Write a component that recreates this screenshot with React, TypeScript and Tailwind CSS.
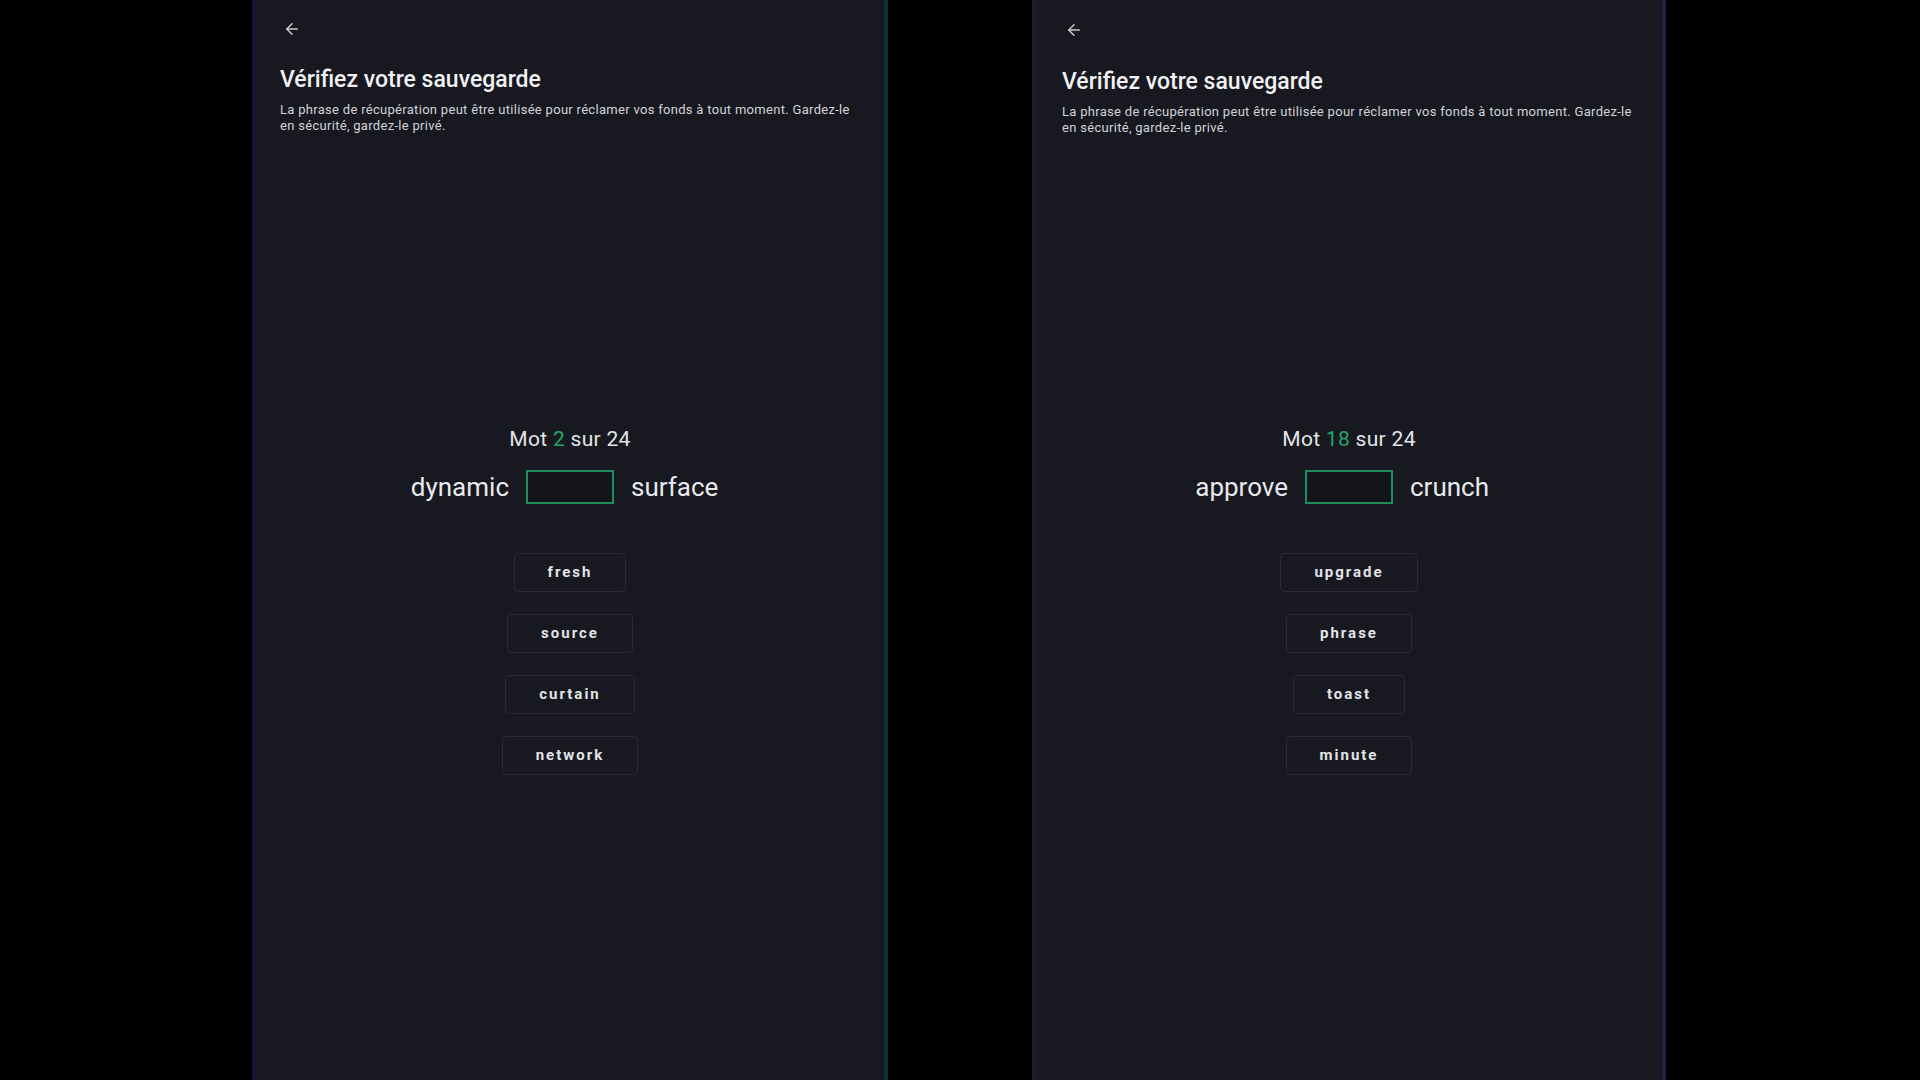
import { ArrowLeft } from "lucide-react";

type Screen = {
  index: number;
  before: string;
  after: string;
  choices: string[];
  shift: number;
  edge: string;
  width: string;
};

const screens: Screen[] = [
  {
    index: 2,
    before: "dynamic",
    after: "surface",
    choices: ["fresh", "source", "curtain", "network"],
    shift: 0,
    edge: "border-l-[#17163a] border-r-[#12302a]",
    width: "w-[636px]",
  },
  {
    index: 18,
    before: "approve",
    after: "crunch",
    choices: ["upgrade", "phrase", "toast", "minute"],
    shift: 1,
    edge: "border-l-[#1d1e22] border-r-[#23223e]",
    width: "w-[634px]",
  },
];

function VerifyScreen({ s }: { s: Screen }) {
  return (
    <div className={`flex h-[1080px] flex-col border-x-4 bg-[#171820] ${s.width} ${s.edge}`}>
      {/* Header */}
      <div className={s.shift ? "pl-[26px] pt-[21px] pr-[24px]" : "pl-[24px] pt-[20px] pr-[24px]"}>
        <button className="ml-[3px] block text-[#c9cad0]">
          <ArrowLeft size={18} strokeWidth={2} />
        </button>
        <h1 className={`${s.shift ? "mt-[28px]" : "mt-[27px]"} text-[23px] font-medium leading-[29px] text-[#f1f1f3]`}>
          Vérifiez votre sauvegarde
        </h1>
        <p className="mt-[8px] text-[13px] leading-[16px] tracking-[0.3px] text-[#d2d3d8]">
          La phrase de récupération peut être utilisée pour réclamer vos fonds à tout moment. Gardez-le en
          sécurité, gardez-le privé.
        </p>
      </div>

      {/* Word check */}
      <div className={`${s.shift ? "mt-[291px]" : "mt-[293px]"} flex flex-col items-center`}>
        <div className="text-[21px] leading-[24px] tracking-[0.3px] text-[#e4e5e8]">
          Mot <span className="text-[#23a56c]">{s.index}</span> sur 24
        </div>
        <div className="mt-[19px] grid w-full grid-cols-[1fr_auto_1fr] items-center gap-[17px]">
          <span className="justify-self-end text-[26px] leading-[33px] text-[#e8e9ec]">{s.before}</span>
          <div className="h-[34px] w-[88px] border-2 border-[#1d8b5a] bg-[#13151b]" />
          <span className="justify-self-start text-[26px] leading-[33px] text-[#e8e9ec]">{s.after}</span>
        </div>

        <div className="mt-[49px] flex flex-col items-center gap-[22px]">
          {s.choices.map((c) => (
            <button
              key={c}
              className="h-[39px] rounded-[4px] border border-[#2a2b35] bg-[#181920] px-[33px] text-[15px] font-bold tracking-[2px] text-[#e3e4e8]"
            >
              {c}
            </button>
          ))}
        </div>
      </div>
    </div>
  );
}

export default function App() {
  return (
    <div
      className="flex h-[1080px] w-[1920px] gap-[144px] overflow-hidden bg-black pl-[252px]"
      style={{ fontFamily: "Roboto, 'Noto Sans', sans-serif" }}
    >
      {screens.map((s) => (
        <VerifyScreen key={s.index} s={s} />
      ))}
    </div>
  );
}
